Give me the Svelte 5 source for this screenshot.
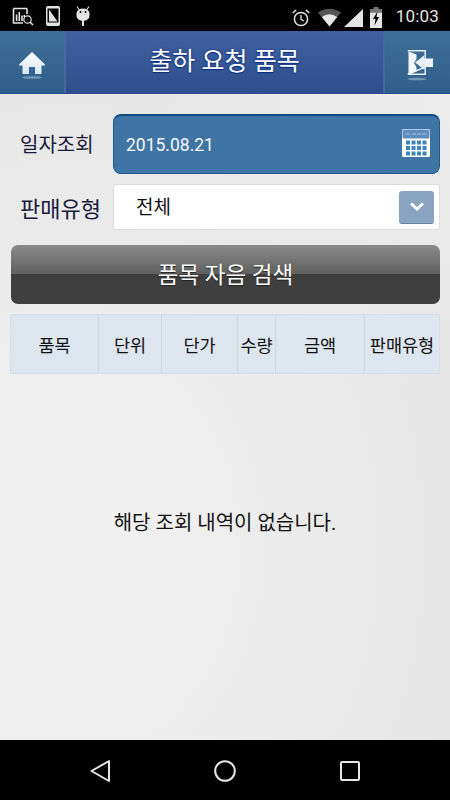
<script>
  const cols = [
    { label: '품목', w: 88 },
    { label: '단위', w: 63 },
    { label: '단가', w: 76 },
    { label: '수량', w: 38 },
    { label: '금액', w: 89 },
    { label: '판매유형', w: 75 }
  ];
</script>

<div class="screen">
  <div class="status">
    <div class="status-left">
      <svg width="22" height="20" viewBox="0 0 22 20">
        <path d="M1.500 2.500H15M1.500 2.500V17H11M15 2.500V8" fill="none" stroke="#e4e4e4" stroke-width="1.600"/>
        <path d="M3.800 8.500h1.600v6.500H3.800zM6.500 6h1.600v9H6.500zM9.200 9.500h1.600v5.500H9.200zM11.500 9h1.500v2h-1.500z" fill="#e4e4e4"/>
        <circle cx="15.500" cy="13.500" r="3.700" fill="none" stroke="#e4e4e4" stroke-width="1.200"/>
        <path d="M18 16l3 3" stroke="#e4e4e4" stroke-width="1.500"/>
      </svg>
      <svg class="ic-sim" width="14" height="20" viewBox="0 0 14 20">
        <rect width="14" height="20" rx="2" fill="#e4e4e4"/>
        <rect x="1.500" y="2.500" width="11" height="14" fill="#000"/>
        <path d="M3 3.500L11.500 15.500H3z" fill="#e4e4e4"/>
      </svg>
      <svg class="ic-bug" width="14" height="20" viewBox="0 0 14 20">
        <path d="M1 0.500L3.500 4M13 0.500L10.500 4" stroke="#e4e4e4" stroke-width="1.100"/>
        <path d="M0.500 7.500A6.500 5 0 0 1 13.500 7.500V10A6.500 5 0 0 1 0.500 10z" fill="#e4e4e4"/>
        <circle cx="4.500" cy="6" r="1" fill="#000"/>
        <circle cx="9.500" cy="6" r="1" fill="#000"/>
        <rect x="6" y="14" width="2" height="6" fill="#e4e4e4"/>
      </svg>
    </div>
    <div class="status-right">
      <svg class="ic-alarm" width="18" height="19" viewBox="0 0 18 19">
        <circle cx="9" cy="11" r="6.600" fill="none" stroke="#e4e4e4" stroke-width="1.500"/>
        <path d="M9 7v4.300l3 1.700" fill="none" stroke="#e4e4e4" stroke-width="1.300"/>
        <path d="M0.800 5L4 2M17.200 5L14 2" stroke="#e4e4e4" stroke-width="1.600"/>
      </svg>
      <svg class="ic-wifi" width="23" height="19" viewBox="0 0 23 19">
        <path d="M0 4.500Q11.500 -3 23 4.500L11.500 18.500z" fill="#555"/>
        <path d="M3.800 9Q11.500 3.500 19.200 9L11.500 18.500z" fill="#e8e8e8"/>
      </svg>
      <svg class="ic-signal" width="20" height="18" viewBox="0 0 20 18">
        <path d="M20 0V18H1z" fill="#e4e4e4"/>
      </svg>
      <svg class="ic-batt" width="12" height="21" viewBox="0 0 12 21">
        <rect x="3.500" y="0" width="5" height="2" fill="#777"/>
        <rect x="0" y="2" width="12" height="3.500" fill="#777"/>
        <rect x="0" y="5.500" width="12" height="15.500" fill="#e4e4e4"/>
        <path d="M7.500 4.500L3 12H5.500L4.500 18.500L9 10H6.500z" fill="#000"/>
      </svg>
      <span class="clock">10:03</span>
    </div>
  </div>

  <header class="head">
    <div class="head-btn left">
      <svg width="26" height="27" viewBox="0 0 26 27">
        <defs>
          <linearGradient id="ihome" x1="0" y1="0" x2="0" y2="1">
            <stop offset="0" stop-color="#ffffff"/>
            <stop offset="1" stop-color="#d5e6f2"/>
          </linearGradient>
        </defs>
        <path d="M13 0L26 12.500V13.500H22.500V22H16V15H10V22H3.500V13.500H0V12.500z" fill="url(#ihome)"/>
        <ellipse cx="13" cy="25.500" rx="10" ry="1.300" fill="#8fb0c8" opacity="0.700"/>
      </svg>
    </div>
    <h1>출하 요청 품목</h1>
    <div class="head-btn right">
      <svg width="26" height="31" viewBox="0 0 26 31">
        <path d="M0.800 0.800H18.200V9M18.200 17V24.200H0.800z" fill="none" stroke="#e6eff6" stroke-width="1.500"/>
        <path d="M1.500 1.500L9.500 4.500V9L7 13L9.500 17V21.500L1.500 24z" fill="#f4f8fb"/>
        <path d="M8 12.500L17 5.500V8.500H26V17H17V19.500z" fill="#e9f1f7"/>
        <ellipse cx="10" cy="29" rx="9.500" ry="1.300" fill="#8fb0c8" opacity="0.700"/>
      </svg>
    </div>
  </header>

  <main class="content">
    <div class="row first">
      <div class="label narrow">일자조회</div>
      <div class="date">
        <span>2015.08.21</span>
        <svg class="cal" width="28" height="28" viewBox="0 0 28 28">
          <rect width="28" height="28" rx="1.500" fill="#fff"/>
          <rect x="0.500" y="0.500" width="27" height="9" rx="1.500" fill="#5f8dbd"/>
          <path d="M4 5h4M10 5h4M15 5h4M20 5h4" stroke="#a9c4de" stroke-width="1.200"/>
          {#each [11.500, 17, 22.500] as y}
            {#each [4, 9.500, 15, 20.500] as x}
              <rect {x} {y} width="4" height="4" fill="#3f85bd"/>
            {/each}
          {/each}
        </svg>
      </div>
    </div>
    <div class="row second">
      <div class="label wide">판매유형</div>
      <div class="select">
        <span class="sel-text">전체</span>
        <div class="arrow">
          <svg width="16" height="11" viewBox="0 0 16 11">
            <path d="M2 2.500L8 8L14 2.500" fill="none" stroke="#fff" stroke-width="3"/>
          </svg>
        </div>
      </div>
    </div>
    <button class="search"><span class="search-text">품목 자음 검색</span></button>
    <div class="table">
      {#each cols as c}
        <div class="cell" style="width:{c.w}px">{c.label}</div>
      {/each}
    </div>
    <p class="empty">해당 조회 내역이 없습니다.</p>
  </main>

  <nav class="nav">
    <svg width="20" height="24" viewBox="0 0 20 24">
      <path d="M19 2V22L1.500 12z" fill="none" stroke="#e6e6e6" stroke-width="2" stroke-linejoin="round"/>
    </svg>
    <svg width="22" height="22" viewBox="0 0 22 22">
      <circle cx="11" cy="11" r="9.800" fill="none" stroke="#e6e6e6" stroke-width="2"/>
    </svg>
    <svg width="20" height="20" viewBox="0 0 20 20">
      <rect x="1" y="1" width="18" height="18" rx="1" fill="none" stroke="#e6e6e6" stroke-width="2"/>
    </svg>
  </nav>
</div>

<style>
  :global(body) {
    margin: 0;
    background: #000;
  }
  .screen {
    width: 450px;
    height: 800px;
    display: flex;
    flex-direction: column;
    overflow: hidden;
    font-family: Roboto, "Noto Sans CJK KR", sans-serif;
  }
  .status {
    height: 31px;
    flex: none;
    box-sizing: border-box;
    padding: 1px 11px 0 12px;
    background: #000;
    display: flex;
    align-items: center;
    justify-content: space-between;
  }
  .status-left, .status-right {
    display: flex;
    align-items: center;
  }
  .ic-sim { margin-left: 12px; }
  .ic-bug { margin-left: 16px; }
  .ic-alarm { margin-top: 3px; }
  .ic-wifi { margin-left: 8px; margin-top: 3px; }
  .ic-signal { margin-left: 2px; margin-top: 3px; }
  .ic-batt { margin-left: 7px; margin-top: 3px; }
  .clock {
    margin-left: 14px;
    color: #e4e4e4;
    font-size: 17px;
    letter-spacing: 0.200px;
  }
  .head {
    height: 63px;
    flex: none;
    box-sizing: border-box;
    display: flex;
    align-items: stretch;
    background: linear-gradient(#40609f, #2f4e8c);
    border-bottom: 1px solid #2a4c96;
  }
  .head-btn {
    flex: none;
    display: flex;
    align-items: center;
    justify-content: center;
    background: linear-gradient(#3f7099, #2f5e88);
  }
  .head-btn.left {
    width: 66px;
    border-right: 2px solid #44699b;
    box-sizing: border-box;
    padding-top: 6px;
  }
  .head-btn.right {
    width: 67px;
    border-left: 2px solid #44699b;
    box-sizing: border-box;
    padding-top: 6px;
    padding-left: 5px;
  }
  h1 {
    flex: 1;
    margin: 0;
    text-align: center;
    color: #fff;
    font-size: 25px;
    font-weight: 400;
    line-height: 61px;
    text-shadow: 0 0 2px #0a2f80, 0 1px 1px #0a2f80;
  }
  .content {
    flex: 1;
    box-sizing: border-box;
    padding: 20px 10px 0 10px;
    background:
      radial-gradient(circle 300px at 100% 0%, rgba(238, 238, 238, 0.9), rgba(238, 238, 238, 0)),
      radial-gradient(ellipse 420px 520px at 15% 70%, #f0f0f0 20%, #e5e5e5 100%);
    display: flex;
    flex-direction: column;
  }
  .row {
    display: flex;
    align-items: center;
  }
  .second { margin-top: 10px; }
  .label {
    width: 103px;
    padding-left: 10px;
    box-sizing: border-box;
    font-size: 20px;
    color: #1a1a3a;
    white-space: nowrap;
  }
  .label.narrow {
    margin-bottom: 2px;
  }
  .label.wide {
    font-size: 22px;
  }
  .date {
    width: 327px;
    height: 60px;
    box-sizing: border-box;
    border-radius: 8px;
    background: #3f74a4;
    border: 1px solid #1f5a90;
    border-top: 2px solid #0f4a80;
    display: flex;
    align-items: center;
    justify-content: space-between;
    padding: 0 9px 0 12px;
    color: #f4f8fb;
    font-size: 17.500px;
  }
  .cal { margin-bottom: 3px; }
  .select {
    width: 327px;
    height: 46px;
    box-sizing: border-box;
    border-radius: 3px;
    background: #fff;
    border: 1px solid #dcdcdc;
    display: flex;
    align-items: center;
    justify-content: space-between;
    padding: 0 5px 0 22px;
    font-size: 19px;
    color: #111;
  }
  .sel-text {
    margin-bottom: 4px;
  }
  .arrow {
    width: 35px;
    height: 33px;
    border-radius: 3px;
    background: #8aa3c1;
    border-bottom: 1px solid #6683a5;
    box-sizing: border-box;
    display: flex;
    align-items: center;
    justify-content: center;
  }
  .search {
    margin: 15px 0 0 1px;
    width: 429px;
    height: 59px;
    border: 0;
    border-radius: 7px;
    padding: 0 0 3px;
    box-sizing: border-box;
    background: linear-gradient(#8b8b8b 0%, #5f5f5f 49%, #3f3f3f 50%, #3f3f3f 100%);
    color: #fff;
    font-family: inherit;
    font-size: 22.500px;
    text-shadow: 0 1px 1px #222;
  }
  .table {
    margin-top: 10px;
    width: 430px;
    height: 60px;
    box-sizing: border-box;
    display: flex;
    border: 1px solid #d5dde6;
    background: #dde5ef;
  }
  .cell {
    box-sizing: border-box;
    flex: none;
    display: flex;
    align-items: center;
    justify-content: center;
    font-size: 17.500px;
    color: #111;
    border-right: 1px solid #cdd5de;
    white-space: nowrap;
    background: #dde5ef;
  }
  .cell:last-child { border-right: 0; flex: 1; }
  .empty {
    margin: 137px 0 0 0;
    text-align: center;
    font-size: 20px;
    line-height: 24px;
    color: #111;
  }
  .nav {
    height: 60px;
    flex: none;
    background: #000;
    display: flex;
    align-items: center;
    justify-content: center;
    gap: 104px;
    padding-top: 1px;
    box-sizing: border-box;
  }
</style>
